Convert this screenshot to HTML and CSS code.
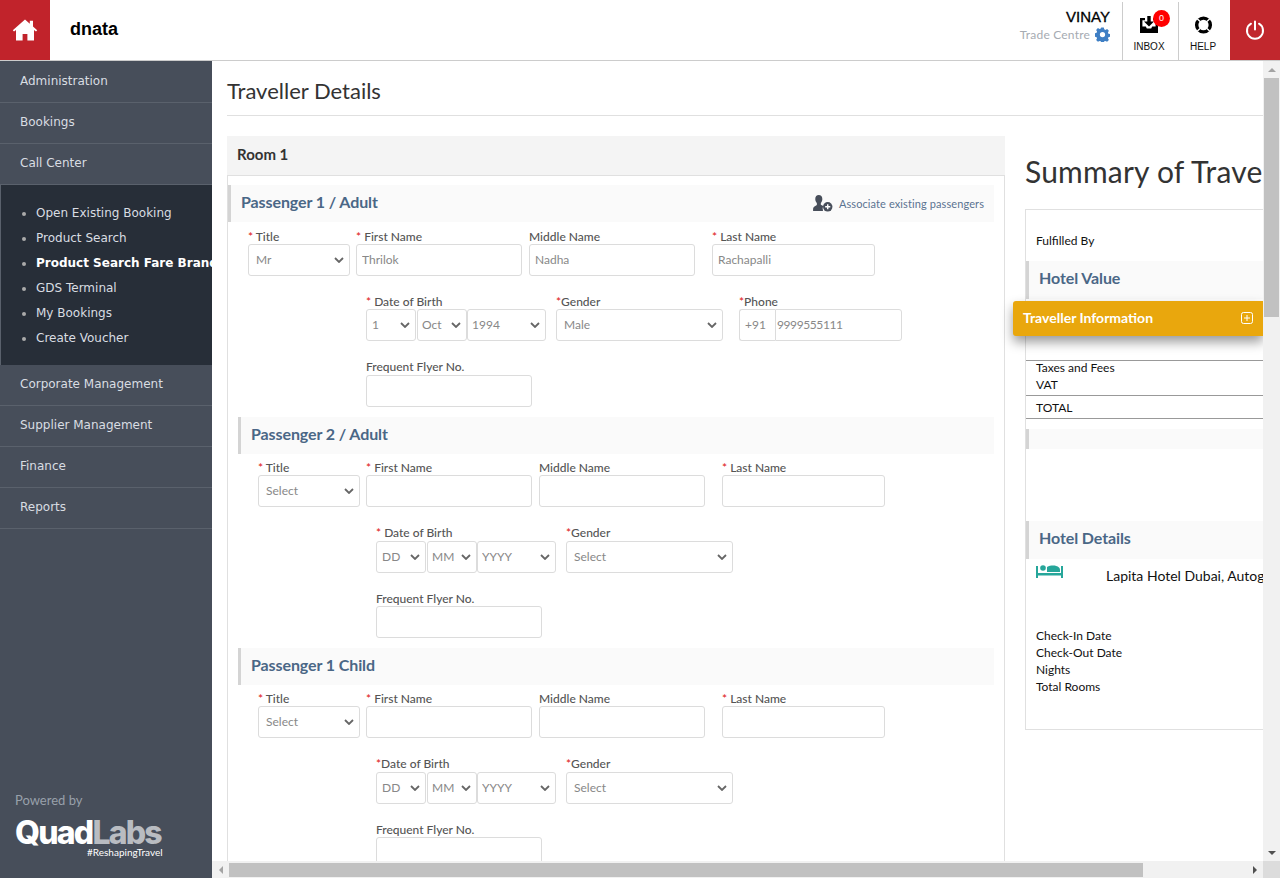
FILE: index.html
```html
<!DOCTYPE html>
<html lang="en">
<head>
<meta charset="utf-8">
<title>Traveller Details</title>
<link rel="stylesheet" href="styles.css">
</head>
<body>
<header class="topbar">
  <a class="home-btn" href="#" aria-label="Home">
    <svg width="26" height="22" viewBox="0 0 26 22"><path fill="#fff" d="M13 0.5 0.8 11.2 2 12.6l2-1.600V21.500h6.600v-6.600h4.800v6.600H22V11l2 1.600 1.200-1.400L21 7.500V1.800h-3.200v2.900z"/></svg>
  </a>
  <div class="brand">dnata</div>
  <div class="user">
    <div class="user-name">VINAY</div>
    <div class="user-place">Trade Centre
      <svg width="15" height="15" viewBox="0 0 16 16"><path fill="#3f7fc4" fill-rule="evenodd" d="M6.600.5h2.800l.4 2 1.300.6 1.800-1 1.900 2-1 1.700.5 1.400 2 .4v2.800l-2 .4-.5 1.300 1 1.800-1.900 1.900-1.800-1-1.300.5-.4 2H6.600l-.4-2-1.300-.5-1.800 1-1.900-1.900 1-1.800-.5-1.300-2-.4V6.600l2-.4.5-1.400-1-1.700 1.900-2 1.800 1 1.300-.6zM8 5.200a2.800 2.800 0 1 0 0 5.600 2.800 2.800 0 0 0 0-5.600z"/></svg>
    </div>
  </div>
  <a class="tool tool-inbox" href="#">
    <svg width="18" height="17" viewBox="0 0 18 17"><path fill="#000" d="M0 2h5v2.200H2.400v6.300H5.800l1 2h4.400l1-2h3.400V4.200H13V2h5v15H0z"/><path fill="#000" d="M7.300 0h3.400v5.500H14L9 10.500 4 5.500h3.300z"/></svg>
    <span class="badge">0</span>
    <span class="tool-label">INBOX</span>
  </a>
  <a class="tool tool-help" href="#">
    <svg width="19" height="18" viewBox="0 0 20 20"><circle cx="10" cy="10" r="7.600" fill="none" stroke="#000" stroke-width="3.800"/><path stroke="#fff" stroke-width="1.500" d="M6.200 6.200 3 3M13.800 6.200 17 3M6.200 13.800 3 17M13.800 13.800 17 17"/></svg>
    <span class="tool-label">HELP</span>
  </a>
  <a class="power-btn" href="#" aria-label="Log out">
    <svg width="20" height="20" viewBox="0 0 20 20"><path fill="none" stroke="#fff" stroke-width="2" stroke-linecap="round" d="M10 1.500v8M6 3.700a8 8 0 1 0 8 0"/></svg>
  </a>
</header>

<div class="shell">
  <aside class="sidebar">
    <nav class="menu">
      <a class="menu-item" href="#">Administration</a>
      <a class="menu-item" href="#">Bookings</a>
      <a class="menu-item" href="#">Call Center</a>
      <ul class="submenu">
        <li>Open Existing Booking</li>
        <li>Product Search</li>
        <li class="current">Product Search Fare Brand</li>
        <li>GDS Terminal</li>
        <li>My Bookings</li>
        <li>Create Voucher</li>
      </ul>
      <a class="menu-item" href="#">Corporate Management</a>
      <a class="menu-item" href="#">Supplier Management</a>
      <a class="menu-item" href="#">Finance</a>
      <a class="menu-item" href="#">Reports</a>
    </nav>
    <div class="powered">
      <div class="powered-by">Powered by</div>
      <div class="logo"><span class="logo-quad">Quad</span><span class="logo-labs">Labs</span></div>
      <div class="logo-tag">#ReshapingTravel</div>
    </div>
  </aside>

  <div class="workspace">
    <main class="scroller">
      <div class="canvas">
        <h1 class="page-title">Traveller Details</h1>
        <div class="columns">
          <section class="left-col">
            <h2 class="room-title">Room 1</h2>
            <div class="room-card">
              <div class="section-head first">
                <span>Passenger 1 / Adult</span>
                <a class="associate" href="#">
                  <svg width="20" height="17" viewBox="0 0 21 18"><path fill="#474e5a" d="M6 0c2.300 0 3.800 1.700 3.800 4.200 0 1.800-.7 3.300-1.600 4.300v1.700c1 .5 2 1 2.700 1.400a5.500 5.500 0 0 0-.4 5.400H0v-2.500c0-1.500 2.600-3 4-3.800V8.500C3 7.500 2.300 6 2.300 4.200 2.300 1.700 3.800 0 6 0z"/><circle cx="15.500" cy="12.500" r="5" fill="#474e5a"/><path stroke="#fff" stroke-width="1.500" d="M15.500 9.800v5.400M12.800 12.500h5.400"/></svg>
                  Associate existing passengers
                </a>
              </div>
              <div class="form-block first">
                <div class="row row-a">
                  <div class="field w-title"><label><i>*</i> Title</label>
                    <select><option>Mr</option></select></div>
                  <div class="field w-first"><label><i>*</i> First Name</label><input value="Thrilok"></div>
                  <div class="field w-mid"><label>Middle Name</label><input value="Nadha"></div>
                  <div class="field w-last"><label><i>*</i> Last Name</label><input value="Rachapalli"></div>
                </div>
                <div class="row row-b">
                  <div class="field w-dob"><label><i>*</i> Date of Birth</label>
                    <div class="dob"><select class="d"><option>1</option></select><select class="m"><option>Oct</option></select><select class="y"><option>1994</option></select></div></div>
                  <div class="field w-gender"><label><i>*</i>Gender</label><select><option>Male</option></select></div>
                  <div class="field w-phone"><label><i>*</i>Phone</label>
                    <div class="phone"><input class="code" value="+91"><input class="num" value="9999555111"></div></div>
                </div>
                <div class="row row-c">
                  <div class="field w-ff"><label>Frequent Flyer No.</label><input></div>
                </div>
              </div>

              <div class="section-head"><span>Passenger 2 / Adult</span></div>
              <div class="form-block">
                <div class="row row-a">
                  <div class="field w-title"><label><i>*</i> Title</label><select><option>Select</option></select></div>
                  <div class="field w-first"><label><i>*</i> First Name</label><input></div>
                  <div class="field w-mid"><label>Middle Name</label><input></div>
                  <div class="field w-last"><label><i>*</i> Last Name</label><input></div>
                </div>
                <div class="row row-b">
                  <div class="field w-dob"><label><i>*</i> Date of Birth</label>
                    <div class="dob"><select class="d"><option>DD</option></select><select class="m"><option>MM</option></select><select class="y"><option>YYYY</option></select></div></div>
                  <div class="field w-gender"><label><i>*</i>Gender</label><select><option>Select</option></select></div>
                </div>
                <div class="row row-c">
                  <div class="field w-ff"><label>Frequent Flyer No.</label><input></div>
                </div>
              </div>

              <div class="section-head"><span>Passenger 1 Child</span></div>
              <div class="form-block">
                <div class="row row-a">
                  <div class="field w-title"><label><i>*</i> Title</label><select><option>Select</option></select></div>
                  <div class="field w-first"><label><i>*</i> First Name</label><input></div>
                  <div class="field w-mid"><label>Middle Name</label><input></div>
                  <div class="field w-last"><label><i>*</i> Last Name</label><input></div>
                </div>
                <div class="row row-b">
                  <div class="field w-dob"><label><i>*</i>Date of Birth</label>
                    <div class="dob"><select class="d"><option>DD</option></select><select class="m"><option>MM</option></select><select class="y"><option>YYYY</option></select></div></div>
                  <div class="field w-gender"><label><i>*</i>Gender</label><select><option>Select</option></select></div>
                </div>
                <div class="row row-c">
                  <div class="field w-ff"><label>Frequent Flyer No.</label><input></div>
                </div>
              </div>
            </div>
          </section>

          <section class="right-col">
            <h2 class="summary-title">Summary of Traveller</h2>
            <div class="summary-box">
              <div class="line-fulfilled">Fulfilled By</div>
              <div class="summary-head">Hotel Value</div>
              <div class="fare-spacer"></div>
              <div class="fare-group">
                <div>Taxes and Fees</div>
                <div>VAT</div>
              </div>
              <div class="fare-total">TOTAL</div>
              <div class="summary-strip"></div>
              <div class="summary-head details">Hotel Details</div>
              <div class="hotel-row">
                <svg width="27" height="13" viewBox="0 0 27 13"><path fill="#26a69a" d="M0 1h2v7h23V1h2v12h-2v-2.500H2V13H0z"/><circle cx="7" cy="3" r="2.800" fill="#26a69a"/><path fill="#26a69a" d="M11 2c4-2 9-2 12 .5 1 .8 1 2 1 4.500H11z"/></svg>
                <span class="hotel-name">Lapita Hotel Dubai, Autograph Collection</span>
              </div>
              <div class="stay-lines">
                <div>Check-In Date</div>
                <div>Check-Out Date</div>
                <div>Nights</div>
                <div>Total Rooms</div>
              </div>
            </div>
          </section>
        </div>
      </div>
    </main>
    <div class="vbar" aria-hidden="true">
      <span class="sb-btn"><span class="arrow up"></span></span>
      <span class="vthumb"></span>
      <span class="sb-fill"></span>
      <span class="sb-btn"><span class="arrow down"></span></span>
    </div>
    <div class="hbar" aria-hidden="true">
      <span class="sb-btn"><span class="arrow left"></span></span>
      <span class="hthumb"></span>
      <span class="sb-fill"></span>
      <span class="sb-btn"><span class="arrow right"></span></span>
    </div>
    <div class="sb-corner"></div>
    <div class="traveller-panel">
      <span>Traveller Information</span>
      <svg width="12" height="12" viewBox="0 0 12 12"><rect x=".5" y=".5" width="11" height="11" rx="2" fill="none" stroke="#fff"/><path stroke="#fff" d="M6 3v6M3 6h6"/></svg>
    </div>
  </div>
</div>
</body>
</html>
```
FILE: styles.css
```css
* { box-sizing: border-box; }
html, body { height: 100%; margin: 0; }
body {
  display: flex;
  flex-direction: column;
  overflow: hidden;
  background: #fff;
  color: #222;
  font-family: Lato, "Open Sans", sans-serif;
}
a { color: inherit; text-decoration: none; }

/* top bar */
.topbar {
  flex: 0 0 61px;
  display: flex;
  align-items: stretch;
  border-bottom: 1px solid #ccc;
  background: #fff;
}
.home-btn {
  width: 50px;
  background: #c1232b;
  display: flex;
  align-items: center;
  justify-content: center;
}
.brand {
  margin-left: 20px;
  font: bold 18px/58px "Liberation Sans", sans-serif;
  color: #000;
  flex: 1;
}
.user {
  width: 160px;
  padding: 9px 12px 0 0;
  text-align: right;
  font-family: "Liberation Sans", sans-serif;
}
.user-name { font-size: 15px; line-height: 16px; color: #000; -webkit-text-stroke: .3px #000; }
.user-place { display: flex; justify-content: flex-end; align-items: center; gap: 5px; height: 18px; font-family: Lato, sans-serif; font-size: 12px; color: #a6abb2; letter-spacing: .2px; }
.tool {
  position: relative;
  border-left: 1px solid #ccc;
  display: flex;
  flex-direction: column;
  align-items: center;
  margin-top: 2px;
  padding-top: 14px;
}
.tool-inbox { width: 56px; padding-right: 3px; }
.tool-help { width: 52px; padding-right: 3px; }
.tool-label { position: absolute; top: 39px; left: -2px; right: 1px; text-align: center; font: 10px/12px "Liberation Sans", sans-serif; color: #111; }
.badge {
  position: absolute;
  top: 8px;
  left: 30px;
  width: 17px;
  height: 17px;
  border-radius: 50%;
  background: #f00;
  color: #fff;
  font: 9px/16px "Liberation Sans", sans-serif;
  text-align: center;
}
.power-btn {
  width: 50px;
  background: #c1272d;
  display: flex;
  align-items: center;
  justify-content: center;
}

/* shell */
.shell { flex: 1; display: flex; min-height: 0; }

.sidebar {
  width: 212px;
  flex: 0 0 212px;
  background: #474e5a;
  display: flex;
  flex-direction: column;
  justify-content: space-between;
  overflow: hidden;
}
.menu { display: flex; flex-direction: column; padding-top: 1px; }
.menu-item {
  height: 41px;
  padding-left: 20px;
  font: 12px/39px "DejaVu Sans", sans-serif;
  color: #d9dde2;
  border-bottom: 1px solid #5a616c;
}
.submenu {
  list-style: disc;
  margin: 0;
  padding: 16px 0 14px 35px;
  height: 180px;
  background: #272e38;
  border-left: 1px solid #5a616c;
  color: #d9dde2;
  font: 12px/25px "DejaVu Sans", sans-serif;
  white-space: nowrap;
  overflow: hidden;
}
.submenu li { height: 25px; }
.submenu li::marker { color: #aaa; }
.submenu .current { font-weight: 700; color: #fff; }
.powered { padding: 0 0 21px 15px; }
.powered-by { font: 13px/16px Lato, sans-serif; color: #98a0aa; margin-bottom: 11px; }
.logo { font: 800 32px/28px "Inter", sans-serif; letter-spacing: -1.800px; white-space: nowrap; }
.logo-quad { color: #fff; }
.logo-labs { color: #b9bcc1; }
.logo-tag { font: 10px/10px Lato, sans-serif; color: #fff; margin: 0 0 0 72px; }

/* workspace */
.workspace {
  position: relative;
  flex: 1;
  min-width: 0;
  display: grid;
  grid-template-columns: minmax(0, 1fr) 17px;
  grid-template-rows: minmax(0, 1fr) 17px;
}
.scroller { overflow: hidden; }
.vbar, .hbar { display: flex; background: #f1f1f1; position: relative; z-index: 2; }
.vbar { flex-direction: column; }
.sb-btn { flex: 0 0 17px; display: flex; align-items: center; justify-content: center; }
.sb-fill { flex: 1; }
.vthumb { height: 239px; margin: 0 1px; background: #c1c1c1; }
.hthumb { width: 914px; margin: 2px 0 1px; background: #c1c1c1; }
.sb-corner { background: #dcdcdc; }
.arrow { width: 0; height: 0; border: 4px solid transparent; }
.arrow.up { border-bottom-color: #a3a3a3; border-top-width: 0; }
.arrow.down { border-top-color: #505050; border-bottom-width: 0; }
.arrow.left { border-right-color: #a3a3a3; border-left-width: 0; }
.arrow.right { border-left-color: #505050; border-right-width: 0; }

.canvas { width: 1172px; height: 2563px; padding: 0 0 0 15px; }
.page-title {
  margin: 0 0 20px;
  height: 55px;
  border-bottom: 1px solid #e0e0e0;
  font-weight: 400;
  font-size: 22px;
  line-height: 59px;
  color: #333;
  width: 1037px;
}
.columns { display: flex; gap: 20px; align-items: flex-start; }

/* left column */
.left-col { width: 778px; flex: none; }
.room-title {
  margin: 0;
  height: 39px;
  padding-left: 10px;
  background: #f4f4f4;
  font-size: 15px;
  font-weight: 700;
  line-height: 36px;
  color: #333;
}
.room-card {
  border: solid #e0e0e0;
  border-width: 1px 1px 0;
  padding: 9px 10px 0 0;
  height: 2000px;
}
.section-head {
  height: 37px;
  margin-left: 10px;
  padding-left: 10px;
  background: #fafafa;
  border-left: 3px solid #d4d4d4;
  color: #4a6786;
  font-size: 16px;
  letter-spacing: -.1px;
  font-weight: 700;
  line-height: 34px;
  display: flex;
  justify-content: space-between;
}
.section-head.first { margin-left: 0; }
.associate {
  display: flex;
  align-items: center;
  gap: 6px;
  font-size: 11px;
  letter-spacing: .1px;
  font-weight: 400;
  color: #5a7391;
  padding-right: 10px;
}
.form-block { padding: 6px 0 10px 30px; }
.form-block.first { padding: 7px 0 10px 20px; }
.row { display: flex; }
.row-b, .row-c { margin: 18px 0 0 118px; }
.field { display: flex; flex-direction: column; }
.field label { height: 15px; font-size: 12px; line-height: 16px; font-weight: 500; color: #555; white-space: nowrap; }
.form-block.first .row-c label { height: 16px; }
.form-block:not(.first) .row-b label { height: 16px; }
.field i { color: #e02020; font-style: normal; }
.w-title { width: 102px; margin-right: 6px; }
.w-first { width: 166px; margin-right: 7px; }
.w-mid { width: 166px; margin-right: 17px; }
.w-last { width: 163px; }
.w-dob { width: 180px; margin-right: 10px; }
.w-gender { width: 167px; margin-right: 16px; }
.w-phone { width: 163px; }
.w-ff { width: 166px; }
input, select {
  height: 32px;
  width: 100%;
  border: 1px solid #dcdcdc;
  border-radius: 3px;
  background-color: #fff;
  font-family: Lato, sans-serif;
  font-size: 12px;
  color: #888;
  padding: 0 5px 2px;
  outline: none;
  margin: 0;
}
select {
  appearance: none;
  padding-left: 7px;
  background-image: url("data:image/svg+xml,%3Csvg xmlns='http://www.w3.org/2000/svg' width='10' height='6'%3E%3Cpath fill='none' stroke='%23666' stroke-width='1.800' d='M1 1l4 4 4-4'/%3E%3C/svg%3E");
  background-repeat: no-repeat;
  background-position: right 5px center;
}
.dob { display: flex; gap: 1px; }
.dob .d { width: 50px; flex: none; padding-left: 5px; }
.dob .m { width: 50px; flex: none; padding-left: 4px; margin-right: -1px; }
.dob .y { width: 79px; flex: none; padding-left: 4px; }
.phone { display: flex; }
.phone .code { width: 36px; flex: none; padding-left: 5px; border-radius: 3px 0 0 3px; border-right: 0; }
.phone .num { flex: 1; border-radius: 0 3px 3px 0; padding-left: 1px; letter-spacing: -.4px; }

/* right column */
.right-col { width: 359px; flex: none; }
.summary-title {
  margin: 18px 0 21px;
  font-weight: 400;
  font-size: 30px;
  letter-spacing: .2px;
  line-height: 34px;
  color: #333;
  white-space: nowrap;
}
.summary-box {
  height: 521px;
  border: 1px solid #e0e0e0;
  color: #111;
  font-size: 12px;
}
.line-fulfilled { padding: 23px 0 0 10px; height: 51px; line-height: 16px; }
.summary-head {
  height: 38px;
  padding-left: 10px;
  border-left: 3px solid #d4d4d4;
  background: #fafafa;
  color: #4a6786;
  font-size: 16px;
  letter-spacing: -.1px;
  font-weight: 700;
  line-height: 34px;
}
.fare-spacer { height: 61px; }
.fare-group {
  display: flex;
  flex-direction: column;
  gap: 3px;
  border-top: 1px solid #999;
  border-bottom: 1px solid #999;
  padding-left: 10px;
  height: 36px;
  line-height: 14px;
}
.fare-total { border-bottom: 1px solid #999; padding-left: 10px; height: 23px; line-height: 24px; }
.summary-strip { height: 20px; margin-top: 10px; background: #fafafa; border-left: 3px solid #d4d4d4; }
.summary-head.details { margin-top: 72px; }
.hotel-row { display: flex; align-items: flex-start; padding: 6px 0 0 10px; height: 60px; white-space: nowrap; }
.hotel-name { margin-left: 43px; font-size: 14px; line-height: 22px; }
.stay-lines { padding: 8px 0 0 10px; line-height: 17px; }

.traveller-panel {
  position: absolute;
  top: 240px;
  right: 17px;
  width: 250px;
  height: 35px;
  padding: 0 10px 2px;
  display: flex;
  justify-content: space-between;
  align-items: center;
  background: #e9a70d;
  border-radius: 3px 0 0 3px;
  box-shadow: 0 6px 12px rgba(0,0,0,.4);
  color: #fff;
  font-size: 14px;
  font-weight: 700;
  z-index: 1;
}
```
